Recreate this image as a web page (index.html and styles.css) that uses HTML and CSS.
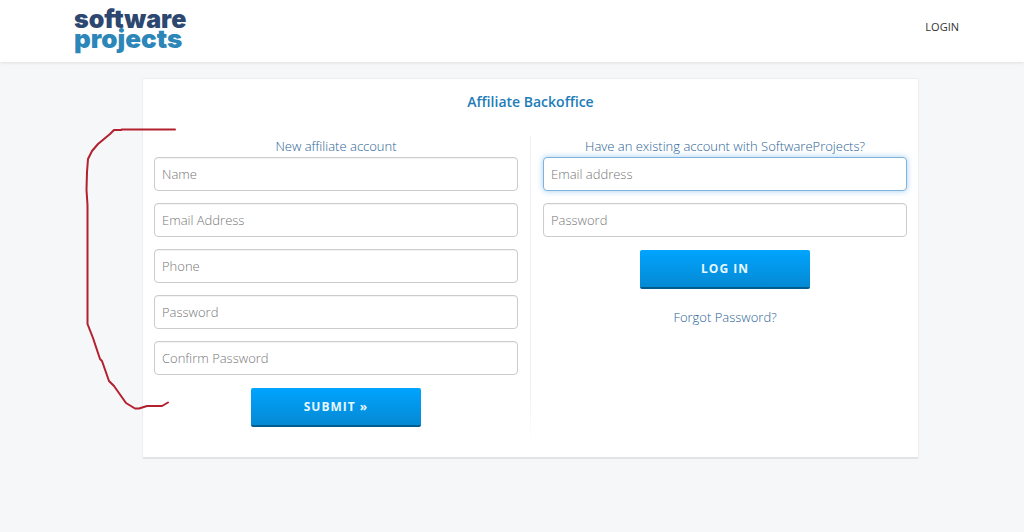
FILE: index.html
```html
<!DOCTYPE html>
<html lang="en">
<head>
    <meta charset="UTF-8">
    <meta name="viewport" content="width=device-width, initial-scale=1.0">
    <title>Affiliate Backoffice</title>
    <link rel="stylesheet" href="styles.css">
</head>
<body>
    <header class="header">
        <a class="logo" href="#">
            <span class="logo-top">software</span>
            <span class="logo-bottom">projects</span>
        </a>
        <nav><a class="nav-link" href="#">LOGIN</a></nav>
    </header>
    <main class="card">
        <h1 class="title">Affiliate Backoffice</h1>
        <div class="columns">
            <form class="column">
                <h2 class="subtitle">New affiliate account</h2>
                <input class="field" type="text" placeholder="Name" aria-label="Name">
                <input class="field" type="email" placeholder="Email Address" aria-label="Email Address">
                <input class="field" type="tel" placeholder="Phone" aria-label="Phone">
                <input class="field" type="password" placeholder="Password" aria-label="Password">
                <input class="field" type="password" placeholder="Confirm Password" aria-label="Confirm Password">
                <button class="button" type="submit">SUBMIT »</button>
            </form>
            <div class="divider"></div>
            <form class="column">
                <h2 class="subtitle">Have an existing account with SoftwareProjects?</h2>
                <input class="field" type="email" placeholder="Email address" aria-label="Email address" autofocus>
                <input class="field" type="password" placeholder="Password" aria-label="Password">
                <button class="button" type="submit">LOG IN</button>
                <a class="forgot" href="#">Forgot Password?</a>
            </form>
        </div>
        <svg class="marker" width="100" height="290" viewBox="80 123 100 290" aria-hidden="true">
            <path d="M175 129.500H122L121 130H114L110 134L98 144L92 151L88 159L87 172L86.500 190L87.500 205V324L93 338L100 359L102 361L109 381L114 386L126 403L135 408.500H139L147 406H162L168 402.500"/>
        </svg>
    </main>
</body>
</html>
```
FILE: styles.css
```css
* {
    margin: 0;
    padding: 0;
    box-sizing: border-box;
}
body {
    font-family: "Open Sans", sans-serif;
    font-size: 13px;
    line-height: 20px;
    background-color: #f5f7f9;
    color: #333;
}
a {
    text-decoration: none;
}
.header {
    display: flex;
    justify-content: space-between;
    align-items: flex-start;
    height: 62px;
    padding: 10px 65px 0 74px;
    background-color: #fff;
    box-shadow: 0 1px 3px rgba(0, 0, 0, 0.1);
}
.logo {
    display: flex;
    flex-direction: column;
    font-family: Inter, sans-serif;
    font-weight: 900;
    font-size: 25px;
    line-height: 19px;
}
.logo-top {
    color: #2c4770;
}
.logo-bottom {
    font-size: 26px;
    color: #2c86b8;
}
.nav-link {
    display: block;
    margin-top: 7px;
    font-size: 11px;
    color: #333;
}
.card {
    position: relative;
    margin: 16px 105px 16px 142px;
    padding: 13px 11px;
    background-color: #fff;
    border: 1px solid #eceef1;
    border-bottom: 2px solid #e3e4e6;
    border-radius: 2px;
}
.title {
    font-size: 14px;
    font-weight: 600;
    line-height: 20px;
    text-align: center;
    color: #1e7cb8;
}
.columns {
    display: flex;
    gap: 12px;
    margin-top: 24px;
}
.column {
    flex: 1;
    display: flex;
    flex-direction: column;
    align-items: center;
    gap: 12px;
}
.subtitle {
    margin-bottom: -11px;
    font-size: 13px;
    font-weight: 300;
    line-height: 20px;
    color: #2a6496;
}
.field {
    width: 100%;
    height: 34px;
    padding: 0 7px;
    border: 1px solid #ccc;
    border-radius: 4px;
    background-color: #fff;
    box-shadow: inset 0 1px 1px rgba(0, 0, 0, 0.05);
    font-family: inherit;
    font-size: 13px;
    font-weight: 300;
    color: #555;
}
.field::placeholder {
    color: #777;
    opacity: 1;
}
.field:focus {
    outline: none;
    border-color: #7fb2dc;
    box-shadow: 0 0 6px rgba(102, 175, 233, 0.6);
    caret-color: transparent;
}
.divider {
    width: 1px;
    height: 308px;
    background: linear-gradient(#f0f2f3, #eceef0 80%, #fff);
}
.button {
    width: 170px;
    height: 39px;
    margin-top: 1px;
    border: none;
    border-bottom: 2px solid #005b8e;
    border-radius: 2px;
    background: linear-gradient(#00a4ff, #0589d3);
    font-family: inherit;
    font-size: 12px;
    font-weight: 700;
    letter-spacing: 1px;
    color: #e8f8ff;
    cursor: pointer;
}
.forgot {
    margin-top: 6px;
    font-weight: 300;
    color: #2a6496;
}
/* hand-drawn bracket beside the signup form */
.marker {
    position: absolute;
    top: 44px;
    left: -63px;
    fill: none;
    stroke: #b3202e;
    stroke-width: 2;
    stroke-linecap: round;
    stroke-linejoin: round;
    pointer-events: none;
}
```
